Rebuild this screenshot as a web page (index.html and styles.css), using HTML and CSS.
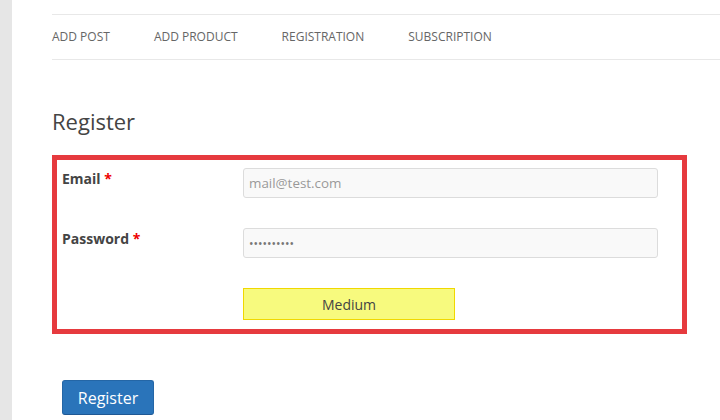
FILE: index.html
```html
<!DOCTYPE html>
<html>
<head>
<meta charset="utf-8">
<link rel="stylesheet" href="styles.css">
</head>
<body>
<div class="page">
  <div class="strip"></div>
  <main class="main">
    <nav class="nav">
      <a class="nav-item">ADD POST</a>
      <a class="nav-item">ADD PRODUCT</a>
      <a class="nav-item">REGISTRATION</a>
      <a class="nav-item">SUBSCRIPTION</a>
    </nav>
    <h1 class="title">Register</h1>
    <form class="form-box">
      <div class="row">
        <label class="label">Email <span class="req">*</span></label>
        <input class="input" type="text" placeholder="mail@test.com">
      </div>
      <div class="row">
        <label class="label">Password <span class="req">*</span></label>
        <input class="input pass" type="password" value="abcdefghij">
      </div>
      <div class="row">
        <span></span>
        <div class="strength">Medium</div>
      </div>
    </form>
    <button class="btn" type="button">Register</button>
  </main>
</div>
</body>
</html>
```

FILE: styles.css
```css
html, body {
  margin: 0;
  padding: 0;
  background: #fff;
  font-family: "Open Sans", "Liberation Sans", sans-serif;
}
.page {
  display: flex;
  min-height: 420px;
}
.strip {
  width: 12px;
  flex: none;
  background: #e6e6e6;
}
.main {
  flex: 1;
  padding-left: 40px;
  padding-top: 14px;
}
.nav {
  display: flex;
  gap: 44px;
  height: 42px;
  padding-bottom: 2px;
  align-items: center;
  border-top: 1px solid #e8e8e8;
  border-bottom: 1px solid #e8e8e8;
}
.nav-item {
  font-size: 12px;
  color: #666;
  text-decoration: none;
}
.title {
  margin: 46px 0 0 0;
  font-size: 22px;
  font-weight: 400;
  line-height: 30px;
  color: #444;
}
.form-box {
  margin: 19px 33px 0 0;
  border: 5px solid #e63a3e;
  padding: 8px 24px 9px 5px;
  display: flex;
  flex-direction: column;
  gap: 30px;
}
.row {
  display: grid;
  grid-template-columns: 181px 1fr;
  align-items: start;
}
.label {
  font-size: 14px;
  font-weight: 700;
  color: #444;
  line-height: 20px;
  padding-top: 1px;
}
.req {
  color: #e00;
}
.input {
  box-sizing: border-box;
  height: 30px;
  width: 100%;
  margin: 0;
  padding: 0 5px;
  border: 1px solid #dcdcdc;
  border-radius: 3px;
  background: #f9f9f9;
  font-family: "Open Sans", "Liberation Sans", sans-serif;
  font-size: 13.4px;
  color: #666;
  outline: none;
}
.input::placeholder {
  color: #999;
}
.pass {
  font-size: 12px;
  color: #777;
}
.strength {
  box-sizing: border-box;
  width: 212px;
  height: 32px;
  background: #f7fa7e;
  border: 1px solid #f0d800;
  font-size: 14px;
  color: #444;
  display: flex;
  align-items: center;
  justify-content: center;
}
.btn {
  display: block;
  margin: 46px 0 0 10px;
  box-sizing: border-box;
  width: 92px;
  height: 35px;
  padding: 0;
  background: #2a74ba;
  border: 1px solid #2466a6;
  border-bottom-color: #1f5894;
  border-radius: 3px;
  color: #fff;
  font-family: "Open Sans", "Liberation Sans", sans-serif;
  font-size: 16px;
}
```
